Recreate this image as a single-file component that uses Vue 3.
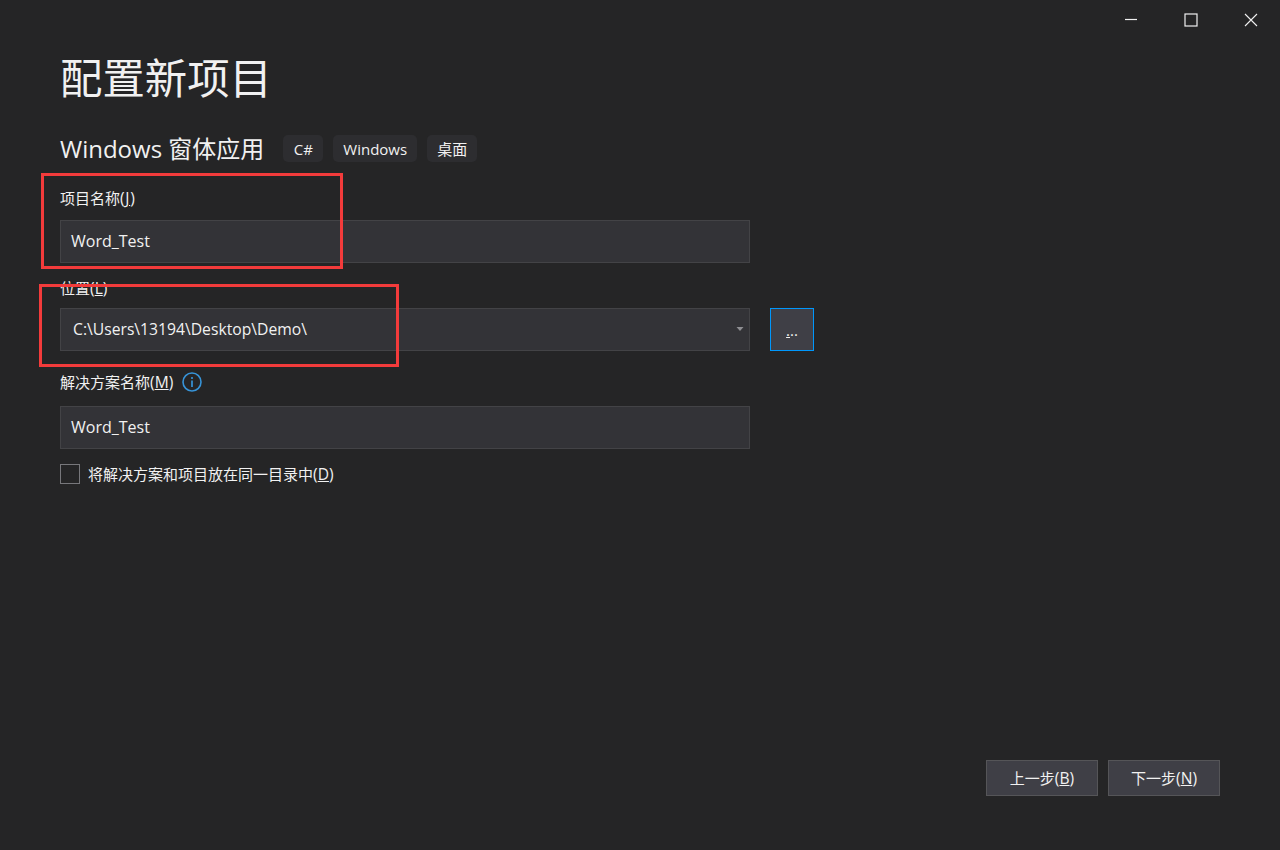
<script setup>
const tags = ['C#', 'Windows', '桌面']
</script>

<template>
  <div class="page">
    <header class="window-controls">
      <button class="win-btn" aria-label="最小化">
        <svg width="14" height="14" viewBox="0 0 14 14"><path d="M1 6.5H13" stroke="#f1f1f1" stroke-width="1.2" fill="none" /></svg>
      </button>
      <button class="win-btn" aria-label="最大化">
        <svg width="14" height="14" viewBox="0 0 14 14"><rect x="1" y="1" width="12" height="12" stroke="#f1f1f1" stroke-width="1.2" fill="none" /></svg>
      </button>
      <button class="win-btn" aria-label="关闭">
        <svg width="14" height="14" viewBox="0 0 14 14"><path d="M1 1L13 13M13 1L1 13" stroke="#f1f1f1" stroke-width="1.1" fill="none" /></svg>
      </button>
    </header>

    <h1 class="title">配置新项目</h1>

    <div class="subtitle-row">
      <h2 class="subtitle">Windows 窗体应用</h2>
      <div class="tags">
        <span v-for="tag in tags" :key="tag" class="tag">{{ tag }}</span>
      </div>
    </div>

    <label class="label label-name">项目名称<span class="acc acc-wide">(<u>J</u>)</span></label>
    <div class="field field-name">Word_Test</div>

    <label class="label label-location">位置<span class="acc">(<u>L</u>)</span></label>
    <div class="location-row">
      <div class="field combo">
        <span class="path">C:\Users\13194\Desktop\Demo\</span>
        <svg class="caret" width="8" height="5" viewBox="0 0 8 5"><path d="M0.5 0H7.5L4 4Z" fill="#8f8f93" /></svg>
      </div>
      <button class="browse"><u>.</u>..</button>
    </div>

    <div class="label label-solution">
      <span>解决方案名称<span class="acc">(<u>M</u>)</span></span>
      <svg class="info" width="20" height="20" viewBox="0 0 20 20">
        <circle cx="10" cy="10" r="9" fill="none" stroke="#3794d8" stroke-width="1.6" />
        <circle cx="10" cy="6" r="1.1" fill="#3794d8" />
        <path d="M10 8.6V15" stroke="#3794d8" stroke-width="1.7" fill="none" />
      </svg>
    </div>
    <div class="field field-solution">Word_Test</div>

    <div class="check-row">
      <span class="checkbox"></span>
      <span>将解决方案和项目放在同一目录中<span class="acc">(<u>D</u>)</span></span>
    </div>

    <footer class="footer">
      <button class="action">上一步<span class="acc">(<u>B</u>)</span></button>
      <button class="action">下一步<span class="acc">(<u>N</u>)</span></button>
    </footer>

    <div class="mark mark-one"></div>
    <div class="mark mark-two"></div>
  </div>
</template>

<style scoped>
.page {
  position: relative;
  box-sizing: border-box;
  width: 1280px;
  height: 850px;
  padding: 0 60px 54px;
  display: flex;
  flex-direction: column;
  background: #252526;
  color: #f1f1f1;
  font-family: "Open Sans", "Noto Sans CJK SC", sans-serif;
  font-size: 15px;
  overflow: hidden;
}
.acc { font-size: 15.6px; }
.acc-wide { letter-spacing: 0.7px; }
.window-controls {
  display: flex;
  justify-content: flex-end;
  height: 40px;
  margin-right: -60px;
}
.win-btn {
  width: 60px;
  height: 40px;
  padding: 0 0 0 2px;
  border: 0;
  background: transparent;
  display: flex;
  align-items: center;
  justify-content: center;
}
.title {
  margin: 0;
  height: 76px;
  font-size: 42.4px;
  line-height: 76px;
  font-weight: 400;
}
.subtitle-row {
  display: flex;
  align-items: center;
  height: 27px;
  margin-top: 19px;
}
.subtitle {
  margin: 0;
  font-size: 24px;
  font-weight: 400;
  line-height: 27px;
}
.tags {
  display: flex;
  gap: 10px;
  margin-left: 19px;
}
.tag {
  box-sizing: border-box;
  height: 27px;
  min-width: 40px;
  padding: 0 10px;
  display: flex;
  align-items: center;
  justify-content: center;
  background: #2d2d30;
  border-radius: 5px;
  font-size: 15px;
}
.label {
  display: flex;
  align-items: center;
  height: 20px;
  line-height: 20px;
}
.label-name { margin-top: 26px; }
.label-location { margin-top: 15px; }
.label-solution { margin-top: 21px; gap: 9px; }
.info { margin-top: -1px; }
.field {
  box-sizing: border-box;
  width: 690px;
  height: 43px;
  padding: 0 10px 2px;
  display: flex;
  align-items: center;
  background: #333337;
  border: 1px solid #434346;
  font-size: 16px;
}
.field-name { margin-top: 12px; }
.field-solution { margin-top: 14px; }
.location-row {
  display: flex;
  gap: 20px;
  margin-top: 10px;
}
.combo {
  padding-left: 12px;
  justify-content: space-between;
}
.path { font-size: 15.7px; }
.caret {
  margin-right: -5px;
  margin-top: 2px;
}
.browse {
  box-sizing: border-box;
  width: 44px;
  height: 43px;
  padding: 0;
  background: #3f3f46;
  border: 1px solid #0097fb;
  color: #f1f1f1;
  font: inherit;
  font-size: 15px;
}
.check-row {
  display: flex;
  align-items: center;
  gap: 8px;
  margin-top: 14px;
}
.checkbox {
  box-sizing: border-box;
  width: 20px;
  height: 20px;
  background: #252526;
  border: 1px solid #77777b;
}
.footer {
  display: flex;
  justify-content: flex-end;
  gap: 10px;
  margin-top: auto;
}
.action {
  box-sizing: border-box;
  width: 112px;
  height: 36px;
  padding: 0 0 1px;
  background: #3f3f46;
  border: 1px solid #555558;
  color: #f1f1f1;
  font: inherit;
}
.mark {
  position: absolute;
  box-sizing: border-box;
  border: 3px solid #f33b3b;
  pointer-events: none;
}
.mark-one {
  left: 41px;
  top: 173px;
  width: 302px;
  height: 96px;
}
.mark-two {
  left: 39px;
  top: 284px;
  width: 360px;
  height: 83px;
}
</style>
